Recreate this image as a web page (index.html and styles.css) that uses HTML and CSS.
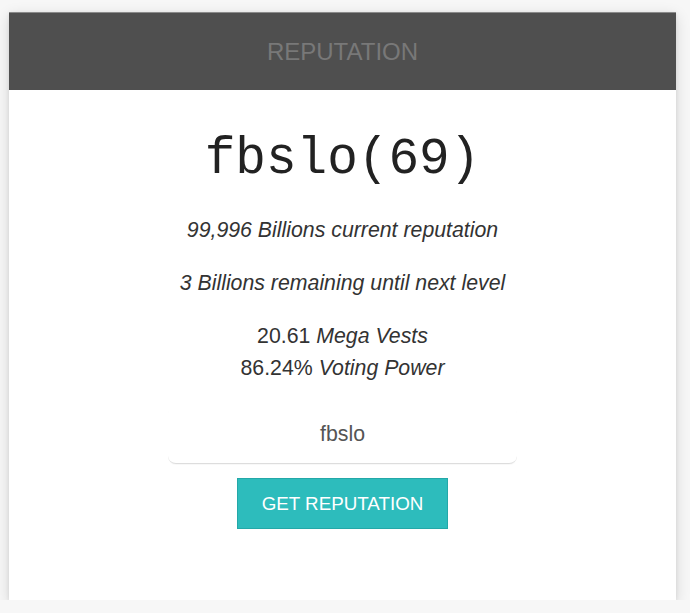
FILE: index.html
```html
<!DOCTYPE html>
<html>
<head>
<meta charset="utf-8">
<link rel="stylesheet" href="styles.css">
</head>
<body>
<div class="card">
  <div class="card-header">REPUTATION</div>
  <div class="card-body">
    <h1 class="name">fbslo(69)</h1>
    <p class="line"><em>99,996 Billions current reputation</em></p>
    <p class="line"><em>3 Billions remaining until next level</em></p>
    <p class="stats">20.61 <em>Mega Vests</em><br>86.24% <em>Voting Power</em></p>
    <div class="field"><input class="input" type="text" value="fbslo"></div>
    <button class="btn">GET REPUTATION</button>
  </div>
</div>
</body>
</html>
```
FILE: styles.css
```css
html, body { margin: 0; padding: 0; }
body {
  background: #f7f7f7;
  font-family: Arial, "Liberation Sans", sans-serif;
  padding: 12px 14px 0 9px;
}
.card {
  background: #fff;
  box-shadow: 0 4px 14px rgba(0,0,0,0.14), 0 1px 4px rgba(0,0,0,0.08);
  height: 588px;
  display: flex;
  flex-direction: column;
}
.card-header {
  background: #4f4f4f;
  border-top: 1px solid #8a8a8a;
  color: #787878;
  height: 77px;
  display: flex;
  align-items: center;
  justify-content: center;
  font-size: 24px;
}
.card-body {
  display: flex;
  flex-direction: column;
  align-items: center;
  color: #333;
}
.name {
  font-family: "Courier New", "Liberation Mono", monospace;
  font-weight: normal;
  font-size: 51px;
  line-height: 56px;
  margin: 42px 0 26px;
  color: #222;
}
.line {
  font-size: 21.3px;
  line-height: 32px;
  margin: 0 0 21px;
}
.stats {
  font-size: 21.3px;
  line-height: 32px;
  margin: 0 0 21px;
  text-align: center;
}
.field {
  width: 349px;
  margin-top: 1px;
}
.input {
  display: block;
  width: 100%;
  box-sizing: border-box;
  height: 58px;
  border: none;
  border-bottom: 1px solid #ddd;
  border-radius: 8px;
  box-shadow: 0 1px 1px rgba(0,0,0,0.03);
  text-align: center;
  font-family: Arial, "Liberation Sans", sans-serif;
  font-size: 21.3px;
  color: #555;
  outline: none;
  background: #fff;
  padding: 0;
}
.btn {
  margin-top: 14px;
  width: 211px;
  height: 51px;
  background: #2dbcbc;
  border: 1px solid #24a8a8;
  color: #fff;
  font-family: Arial, "Liberation Sans", sans-serif;
  font-size: 18.8px;
  padding: 0;
}
```
